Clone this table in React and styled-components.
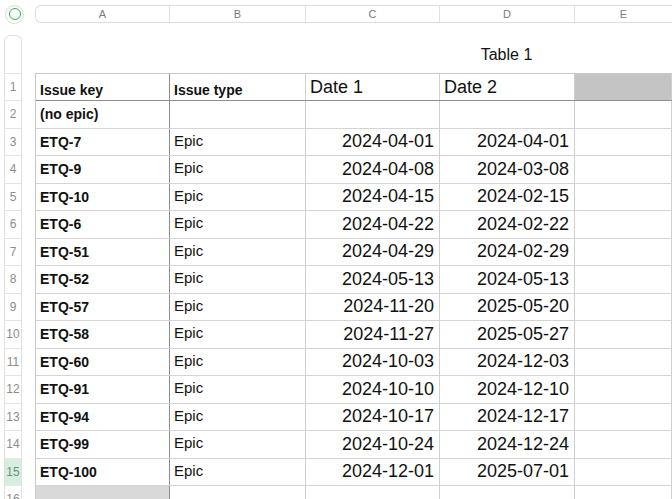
import React from 'react'
import styled, { createGlobalStyle } from 'styled-components'

const GlobalStyle = createGlobalStyle`
  html, body {
    margin: 0;
    padding: 0;
    background: #ffffff;
    font-family: "Liberation Sans", Arial, sans-serif;
    overflow: hidden;
  }
`

const COLS = '134px 136px 134px 135px 1fr'
const ROW_H = 27.5

const rows = [
  { key: 'ETQ-7', type: 'Epic', d1: '2024-04-01', d2: '2024-04-01' },
  { key: 'ETQ-9', type: 'Epic', d1: '2024-04-08', d2: '2024-03-08' },
  { key: 'ETQ-10', type: 'Epic', d1: '2024-04-15', d2: '2024-02-15' },
  { key: 'ETQ-6', type: 'Epic', d1: '2024-04-22', d2: '2024-02-22' },
  { key: 'ETQ-51', type: 'Epic', d1: '2024-04-29', d2: '2024-02-29' },
  { key: 'ETQ-52', type: 'Epic', d1: '2024-05-13', d2: '2024-05-13' },
  { key: 'ETQ-57', type: 'Epic', d1: '2024-11-20', d2: '2025-05-20' },
  { key: 'ETQ-58', type: 'Epic', d1: '2024-11-27', d2: '2025-05-27' },
  { key: 'ETQ-60', type: 'Epic', d1: '2024-10-03', d2: '2024-12-03' },
  { key: 'ETQ-91', type: 'Epic', d1: '2024-10-10', d2: '2024-12-10' },
  { key: 'ETQ-94', type: 'Epic', d1: '2024-10-17', d2: '2024-12-17' },
  { key: 'ETQ-99', type: 'Epic', d1: '2024-10-24', d2: '2024-12-24' },
  { key: 'ETQ-100', type: 'Epic', d1: '2024-12-01', d2: '2025-07-01' },
]

function App() {
  const rowNumbers = Array.from({ length: 16 }, (_, i) => i + 1)

  return (
    <Page>
      <GlobalStyle />
      <TopRow>
        <CornerButton>
          <GreenRing />
        </CornerButton>
        <ColumnHeaders>
          {['A', 'B', 'C', 'D', 'E'].map((l) => (
            <ColumnLetter key={l}>{l}</ColumnLetter>
          ))}
        </ColumnHeaders>
      </TopRow>

      <MainRow>
        <RowGutter>
          <GutterTop />
          {rowNumbers.map((n) => (
            <RowNumber key={n} active={n === 15}>{n}</RowNumber>
          ))}
        </RowGutter>

        <Sheet>
          <TitleRow>
            <Title>Table 1</Title>
          </TitleRow>

          <Table>
            <Row header>
              <Cell keyCol header>
                <KeyText>Issue key</KeyText>
              </Cell>
              <Cell header>
                <KeyText>Issue type</KeyText>
              </Cell>
              <Cell header>
                <BigText>Date 1</BigText>
              </Cell>
              <Cell header>
                <BigText>Date 2</BigText>
              </Cell>
              <Cell header shaded="#c4c4c4" />
            </Row>

            <Row>
              <Cell keyCol>
                <KeyText>(no epic)</KeyText>
              </Cell>
              <Cell />
              <Cell />
              <Cell />
              <Cell />
            </Row>

            {rows.map((r) => (
              <Row key={r.key}>
                <Cell keyCol>
                  <KeyText>{r.key}</KeyText>
                </Cell>
                <Cell>
                  <TypeText>{r.type}</TypeText>
                </Cell>
                <Cell right>
                  <BigText>{r.d1}</BigText>
                </Cell>
                <Cell right>
                  <BigText>{r.d2}</BigText>
                </Cell>
                <Cell />
              </Row>
            ))}

            <Row>
              <Cell keyCol shaded="#d9d9d9" />
              <Cell />
              <Cell />
              <Cell />
              <Cell />
            </Row>
          </Table>
        </Sheet>
      </MainRow>
    </Page>
  )
}

export default App

const Page = styled.div`
  width: 672px;
  height: 499px;
  padding: 5px 0 0 4px;
  box-sizing: border-box;
  overflow: hidden;
`

const TopRow = styled.div`
  display: flex;
  align-items: center;
  height: 18px;
`

const CornerButton = styled.div`
  width: 19px;
  height: 19px;
  margin-left: 1px;
  box-sizing: border-box;
  border: 1px solid #dcdcdc;
  border-radius: 50%;
  display: flex;
  align-items: center;
  justify-content: center;
  background: #fcfcfc;
`

const GreenRing = styled.div`
  width: 12px;
  height: 12px;
  box-sizing: border-box;
  border: 1.5px solid #34b04a;
  border-radius: 50%;
`

const ColumnHeaders = styled.div`
  flex: 1;
  margin-left: 11px;
  height: 18px;
  display: grid;
  grid-template-columns: ${COLS};
  box-sizing: border-box;
  border: 1px solid #dedede;
  border-right: none;
  border-radius: 6px 0 0 6px;
  background: #ffffff;
`

const ColumnLetter = styled.div`
  display: flex;
  align-items: center;
  justify-content: center;
  font-size: 11px;
  color: #7a7a7a;
  border-right: 1px solid #e2e2e2;
  &:last-child {
    border-right: none;
  }
`

const MainRow = styled.div`
  display: flex;
  margin-top: 12px;
`

const RowGutter = styled.div`
  width: 18px;
  box-sizing: border-box;
  border: 1px solid #e0e0e0;
  border-bottom: none;
  border-radius: 6px 6px 0 0;
  background: #ffffff;
  display: flex;
  flex-direction: column;
`

const GutterTop = styled.div`
  height: 36.5px;
  border-bottom: 1px solid #e4e4e4;
`

const RowNumber = styled.div`
  height: ${ROW_H}px;
  box-sizing: border-box;
  border-bottom: 1px solid #e4e4e4;
  display: flex;
  align-items: center;
  justify-content: center;
  font-size: 12px;
  color: ${(p) => (p.active ? '#6f8f7a' : '#8c8c8c')};
  background: ${(p) => (p.active ? '#d5efdf' : 'transparent')};
`

const Sheet = styled.div`
  flex: 1;
  margin-left: 13px;
  display: flex;
  flex-direction: column;
`

const TitleRow = styled.div`
  height: 37.5px;
  display: grid;
  grid-template-columns: ${COLS};
`

const Title = styled.div`
  grid-column: 4;
  display: flex;
  align-items: center;
  justify-content: center;
  padding-top: 2px;
  font-size: 16px;
  color: #111;
`

const Table = styled.div`
  border-left: 1px solid #c9c9c9;
  border-top: 1px solid #c9c9c9;
`

const Row = styled.div`
  display: grid;
  grid-template-columns: ${COLS};
  height: ${ROW_H}px;
  box-sizing: border-box;
  border-bottom: 1px solid ${(p) => (p.header ? '#8e8e8e' : '#d4d4d4')};
`

const Cell = styled.div`
  box-sizing: border-box;
  border-right: 1px solid ${(p) => (p.keyCol ? '#8e8e8e' : '#d0d0d0')};
  background: ${(p) => p.shaded || '#ffffff'};
  display: flex;
  align-items: ${(p) => (p.header ? 'flex-end' : 'center')};
  justify-content: ${(p) => (p.right ? 'flex-end' : 'flex-start')};
  padding: ${(p) => (p.header ? '0 5px 2px 4px' : '0 5px 0 4px')};
  overflow: hidden;
  white-space: nowrap;
`

const KeyText = styled.span`
  font-size: 14px;
  font-weight: 700;
  color: #111;
`

const TypeText = styled.span`
  font-size: 15px;
  color: #111;
  margin-top: -3px;
`

const BigText = styled.span`
  font-size: 18px;
  color: #111;
`
